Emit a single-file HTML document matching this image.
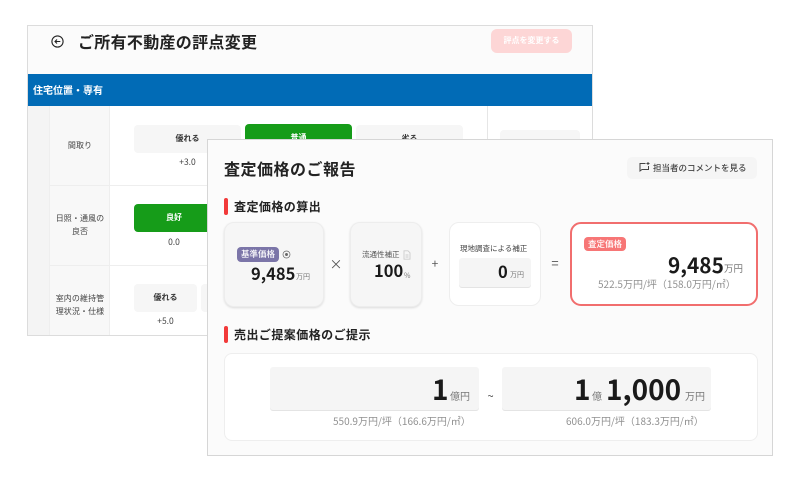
<!DOCTYPE html>
<html lang="ja"><head><meta charset="utf-8"><style>
html,body{margin:0;padding:0;background:#fff}
body{width:800px;height:480px;position:relative;overflow:hidden;font-family:"Noto Sans CJK JP","Liberation Sans",sans-serif;color:#222}
div,span.a{position:absolute;box-sizing:border-box;white-space:nowrap}
.c{text-align:center}.r{text-align:right}
.opt{background:#f6f6f6;border-radius:4px;height:28px;line-height:28px;text-align:center;font-size:8px;font-weight:700;color:#333}
.g{background:#169c19;color:#fff;border-radius:4px}
.lbl{font-size:8px;line-height:13px;text-align:center;color:#444;letter-spacing:.1px}
.v{font-size:8.5px;color:#444;text-align:center;line-height:12px}
.card{background:#f6f6f6;border:1px solid #ededed;border-radius:10px;box-shadow:0 1px 2px rgba(0,0,0,.13)}
.wc{background:#fff;border:1px solid #eeeeee;border-radius:8px}
.field{background:#f5f5f5;border-radius:3px;box-shadow:0 1px 0 #e4e4e4}
.bar{background:#f23a3a;width:4px;height:17px;border-radius:2px}
.h2{font-size:12px;font-weight:700;line-height:18px;color:#222;letter-spacing:.45px}
.num{font-weight:700;color:#1a1a1a;line-height:1}
.u{color:#777;line-height:1}
.sub{color:#909090;font-size:10px;line-height:14px}
</style></head><body>

<div style="left:27px;top:25px;width:566px;height:311px;background:#fff;border:1px solid #dcdcdc"></div>
<div style="left:28px;top:26px;width:564px;height:48px;background:#fbfbfb"></div>
<svg style="position:absolute;left:50px;top:34px" width="15" height="15" viewBox="0 0 15 15" fill="none" stroke="#222" stroke-width="1.1"><circle cx="7.5" cy="7.500" r="5.6"/><path d="M10.3 7.500H5M7 5.500l-2 2 2 2"/></svg>
<div style="left:78px;top:30px;font-size:16px;line-height:22px;font-weight:700;color:#222;letter-spacing:.3px">ご所有不動産の評点変更</div>
<div class="c" style="left:491px;top:29px;width:81px;height:24px;line-height:24px;background:#fdd6d6;border-radius:6px;color:#fff;font-size:8px;font-weight:700">評点を変更する</div>
<div style="left:28px;top:74px;width:564px;height:32px;background:#016bb6"></div>
<div style="left:33px;top:83px;font-size:10px;line-height:14px;font-weight:700;color:#fff">住宅位置・専有</div>

<div style="left:28px;top:106px;width:21px;height:229px;background:#f4f4f4"></div>
<div style="left:49px;top:106px;width:61px;height:229px;background:#f8f8f8;border-left:1px solid #eee;border-right:1px solid #eee"></div>
<div style="left:49px;top:185px;width:543px;height:1px;background:#eee"></div>
<div style="left:49px;top:265px;width:543px;height:1px;background:#eee"></div>
<div style="left:487px;top:106px;width:1px;height:80px;background:#e6e6e6"></div>
<div style="left:500px;top:130px;width:80px;height:20px;background:#f6f6f6;border-radius:4px"></div>

<div class="lbl" style="left:50px;top:139px;width:60px">間取り</div>
<div class="opt" style="left:134px;top:125px;width:107px">優れる</div>
<div class="v" style="left:134px;top:156px;width:107px">+3.0</div>
<div class="opt g" style="left:245px;top:124px;width:107px;height:29px">普通</div>
<div class="opt" style="left:356px;top:125px;width:107px">劣る</div>

<div class="lbl" style="left:50px;top:212px;width:60px">日照・通風の<br>良否</div>
<div class="opt g" style="left:134px;top:204px;width:80px">良好</div>
<div class="v" style="left:134px;top:236px;width:80px">0.0</div>

<div class="lbl" style="left:50px;top:292px;width:60px">室内の維持管<br>理状況・仕様</div>
<div class="opt" style="left:134px;top:284px;width:63px">優れる</div>
<div class="opt" style="left:201px;top:284px;width:10px"></div>
<div class="v" style="left:134px;top:315px;width:63px">+5.0</div>

<div style="left:207px;top:139px;width:566px;height:317px;background:#fbfbfb;border:1px solid #d6d6d6"></div>
<div style="left:224px;top:157px;font-size:16px;line-height:23px;font-weight:700;color:#222;letter-spacing:.5px">査定価格のご報告</div>

<div class="c" style="left:627px;top:157px;width:130px;height:22px;background:#f5f5f5;border-radius:5px"></div>
<svg style="position:absolute;left:638px;top:161px" width="13" height="13" viewBox="0 0 13 13" fill="none" stroke="#444" stroke-width="1"><path d="M7.500 2.500H2v7.500l2-1.500h6.500V5"/><path d="M10 1v3M8.500 2.500h3"/></svg>
<div style="left:653px;top:161px;font-size:8.500px;line-height:14px;font-weight:500;color:#444">担当者のコメントを見る</div>

<div class="bar" style="left:224px;top:198px"></div>
<div class="h2" style="left:234px;top:198px">査定価格の算出</div>

<div class="card" style="left:224px;top:222px;width:100px;height:85px"></div>
<div class="c" style="left:237px;top:247px;width:42px;height:15px;line-height:15px;background:#7b75a8;color:#fff;border-radius:4px;font-size:8.500px;font-weight:500">基準価格</div>
<svg style="position:absolute;left:282px;top:250px" width="9" height="9" viewBox="0 0 9 9" fill="none" stroke="#666" stroke-width=".7"><circle cx="4.500" cy="4.500" r="3.500"/><circle cx="4.500" cy="4.500" r="1.100" fill="#666"/></svg>
<div class="num" style="left:251px;top:265px;font-size:16.500px">9,485</div>
<div class="u" style="left:296px;top:274px;font-size:7px">万円</div>
<div class="c" style="left:326px;top:256px;width:20px;font-size:13px;line-height:16px;color:#555">×</div>

<div class="card" style="left:350px;top:222px;width:72px;height:85px"></div>
<div style="left:362px;top:249px;font-size:7.500px;line-height:12px;color:#555">流通性補正</div>
<svg style="position:absolute;left:403px;top:250px" width="8" height="10" viewBox="0 0 8 10" fill="none" stroke="#ccc" stroke-width=".9"><path d="M1 .8h4l2 2v6.400H1zM2.500 5h3M2.500 7h3"/></svg>
<div class="num" style="left:374px;top:262px;font-size:16.500px">100</div>
<div class="u" style="left:404px;top:273px;font-size:7px">%</div>
<div class="c" style="left:425px;top:256px;width:20px;font-size:12px;line-height:16px;color:#555">+</div>

<div class="wc" style="left:449px;top:222px;width:92px;height:84px;border-radius:10px"></div>
<div style="left:460px;top:243px;font-size:7.500px;line-height:12px;color:#444">現地調査による補正</div>
<div class="field" style="left:459px;top:258px;width:72px;height:29px"></div>
<div class="num" style="left:498px;top:263px;font-size:16.500px">0</div>
<div class="u" style="left:510px;top:272px;font-size:7px">万円</div>
<div class="c" style="left:545px;top:255px;width:20px;font-size:13px;line-height:16px;color:#555">=</div>

<div style="left:570px;top:222px;width:188px;height:84px;background:#fff;border:2px solid #f16e6e;border-radius:11px"></div>
<div class="c" style="left:584px;top:237px;width:42px;height:14px;line-height:14px;background:#f77676;color:#fff;border-radius:4px;font-size:8.500px;font-weight:500">査定価格</div>
<div class="num" style="left:668px;top:254px;font-size:20.800px">9,485</div>
<div class="u" style="left:724px;top:264px;font-size:9.500px">万円</div>
<div class="sub" style="left:598px;top:277px">522.5万円/坪（158.0万円/㎡）</div>

<div class="bar" style="left:224px;top:326px"></div>
<div class="h2" style="left:234px;top:326px">売出ご提案価格のご提示</div>
<div class="wc" style="left:224px;top:353px;width:534px;height:88px"></div>

<div class="field" style="left:270px;top:367px;width:209px;height:43px"></div>
<div class="num" style="left:432px;top:375px;font-size:28px">1</div>
<div class="u" style="left:450px;top:391px;font-size:10px">億円</div>
<div class="sub" style="left:333px;top:414px">550.9万円/坪（166.6万円/㎡）</div>
<div class="c" style="left:480px;top:389px;width:21px;font-size:11px;line-height:14px;color:#444">~</div>

<div class="field" style="left:502px;top:367px;width:209px;height:43px"></div>
<div class="num" style="left:574px;top:375px;font-size:28px">1</div>
<div class="u" style="left:592px;top:391px;font-size:10px">億</div>
<div class="num" style="left:606px;top:375px;font-size:28px">1,000</div>
<div class="u" style="left:685px;top:391px;font-size:10px">万円</div>
<div class="sub" style="left:566px;top:414px">606.0万円/坪（183.3万円/㎡）</div>

</body></html>
